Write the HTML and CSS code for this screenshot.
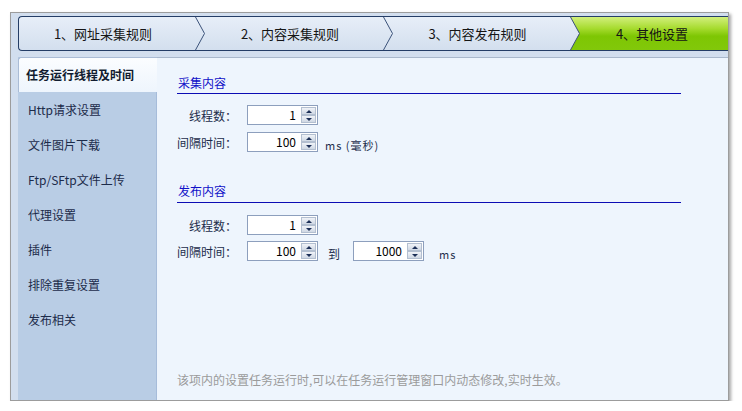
FILE: index.html
```html
<!DOCTYPE html>
<html lang="zh-CN">
<head>
    <meta charset="UTF-8">
    <title>其他设置</title>
    <link rel="stylesheet" href="styles.css">
</head>
<body>
    <div class="frame">
        <div class="steps">
            <div class="step step-1">1、网址采集规则</div>
            <svg class="sep" width="10" height="33" viewBox="0 0 10 33"><polyline points="0.5,0 9.5,16.5 0.5,33" /></svg>
            <div class="step step-2">2、内容采集规则</div>
            <svg class="sep" width="10" height="33" viewBox="0 0 10 33"><polyline points="0.5,0 9.5,16.5 0.5,33" /></svg>
            <div class="step step-3">3、内容发布规则</div>
            <svg class="sep" width="10" height="33" viewBox="0 0 10 33">
                <defs>
                    <linearGradient id="green" x1="0" y1="0" x2="0" y2="1">
                        <stop offset="0" stop-color="#d2ef7c" />
                        <stop offset="0.35" stop-color="#a6db2e" />
                        <stop offset="0.58" stop-color="#7ec603" />
                        <stop offset="1" stop-color="#82c80a" />
                    </linearGradient>
                </defs>
                <polygon points="0.5,0 10,0 10,33 0.5,33 9.5,16.5" fill="url(#green)" />
                <polyline points="0.5,0 9.5,16.5 0.5,33" />
            </svg>
            <div class="step step-active">4、其他设置</div>
        </div>

        <div class="main">
            <ul class="side">
                <li class="active">任务运行线程及时间</li>
                <li>Http请求设置</li>
                <li>文件图片下载</li>
                <li>Ftp/SFtp文件上传</li>
                <li>代理设置</li>
                <li>插件</li>
                <li>排除重复设置</li>
                <li>发布相关</li>
            </ul>

            <div class="content">
                <div class="sec">
                    <div class="sec-title">采集内容</div>
                    <div class="row">
                        <span class="lbl">线程数：</span>
                        <div class="spin"><span class="spin-val">1</span><span class="spin-btns"><i class="up"></i><i class="down"></i></span></div>
                    </div>
                    <div class="row">
                        <span class="lbl">间隔时间：</span>
                        <div class="spin"><span class="spin-val">100</span><span class="spin-btns"><i class="up"></i><i class="down"></i></span></div>
                        <span class="unit">ms (毫秒)</span>
                    </div>
                </div>

                <div class="sec sec-2">
                    <div class="sec-title">发布内容</div>
                    <div class="row">
                        <span class="lbl">线程数：</span>
                        <div class="spin"><span class="spin-val">1</span><span class="spin-btns"><i class="up"></i><i class="down"></i></span></div>
                    </div>
                    <div class="row">
                        <span class="lbl">间隔时间：</span>
                        <div class="spin"><span class="spin-val">100</span><span class="spin-btns"><i class="up"></i><i class="down"></i></span></div>
                        <span class="to">到</span>
                        <div class="spin"><span class="spin-val">1000</span><span class="spin-btns"><i class="up"></i><i class="down"></i></span></div>
                        <span class="unit unit-ms">ms</span>
                    </div>
                </div>

                <p class="note">该项内的设置任务运行时,可以在任务运行管理窗口内动态修改,实时生效。</p>
            </div>
        </div>
    </div>
</body>
</html>
```

FILE: styles.css
```css
* {
    margin: 0;
    padding: 0;
    box-sizing: border-box;
}

body {
    background-color: #fff;
    font-family: "Noto Sans CJK SC", sans-serif;
    font-size: 12px;
    color: #1d2d4b;
}

.frame {
    width: 719px;
    height: 389px;
    margin: 12px 0 0 10px;
    padding: 3px 0 0 7px;
    background-color: #d2deee;
    border: 1px solid #9c9c9c;
    box-shadow: 2px 2px 3px rgba(0, 0, 0, .35);
    overflow: hidden;
    display: flex;
    flex-direction: column;
}

/* wizard steps */
.steps {
    display: flex;
    flex-shrink: 0;
    height: 35px;
    border: 1px solid #243d66;
    border-right: 0;
    border-radius: 4px 0 0 4px;
    background: linear-gradient(#e7eef8, #d3dfee);
}

.step {
    display: flex;
    align-items: center;
    justify-content: center;
    padding-right: 8px;
    font-size: 13px;
    color: #151515;
}

.step-1 { width: 176px; }
.step-2 { width: 178px; }
.step-3 { width: 177px; }

.step-active {
    flex: 1;
    padding-right: 4px;
    background: linear-gradient(#d2ef7c 0%, #a6db2e 35%, #7ec603 58%, #82c80a 100%);
}

.sep {
    display: block;
    flex-shrink: 0;
}

.sep polyline {
    fill: none;
    stroke: #3b5279;
    stroke-width: 1;
}

/* body */
.main {
    display: flex;
    flex: 1;
    margin-top: 6px;
}

.side {
    width: 139px;
    list-style: none;
    background-color: #b9cde5;
    border-right: 1px solid #a6bcda;
}

.side li {
    height: 35px;
    line-height: 35px;
    padding-left: 10px;
    color: #1c2b4a;
}

.side li.active {
    margin-right: -1px;
    padding-left: 7px;
    line-height: 33px;
    font-weight: bold;
    color: #111c30;
    background: linear-gradient(#fbfdff, #eef5fd);
    border-top: 1px solid #aabcd6;
    border-left: 1px solid #aabcd6;
    border-radius: 3px 0 0 0;
}

.content {
    flex: 1;
    display: flex;
    flex-direction: column;
    padding: 17px 0 12px 20px;
    background-color: #eef5fd;
    border-top: 1px solid #a9b8cc;
}

.sec-title {
    width: 504px;
    line-height: 16px;
    padding: 0 0 2px 1px;
    border-bottom: 1px solid #0c0cb4;
    color: #1010c8;
}

.sec-2 {
    margin-top: 31px;
}

.sec-2 .sec-title {
    padding-bottom: 3px;
}

.row {
    display: flex;
    align-items: center;
    height: 20px;
    margin-top: 7px;
}

.sec-title + .row {
    margin-top: 11px;
}

.sec-2 .sec-title + .row {
    margin-top: 12px;
}

.sec-2 .row + .row {
    margin-top: 6px;
}

.lbl {
    width: 60px;
    margin-right: 10px;
    text-align: right;
}

.spin {
    display: flex;
    width: 71px;
    height: 20px;
    background-color: #fff;
    border: 1px solid #8d9fbd;
}

.spin-val {
    flex: 1;
    padding-right: 5px;
    line-height: 18px;
    text-align: right;
    color: #000;
}

.spin-btns {
    width: 16px;
    display: flex;
    flex-direction: column;
    padding: 1px 1px 1px 0;
}

.spin-btns i {
    flex: 1;
    display: flex;
    align-items: center;
    justify-content: center;
    border: 1px solid #b3bfd0;
    background: linear-gradient(#f0f3f8, #cfd8e4);
}

.spin-btns .up::after {
    content: "";
    border: 3px solid transparent;
    border-top: 0;
    border-bottom: 3px solid #1d3058;
}

.spin-btns .down::after {
    content: "";
    border: 3px solid transparent;
    border-bottom: 0;
    border-top: 3px solid #1d3058;
}

.unit {
    margin-left: 7px;
    padding-top: 5px;
    font-size: 11px;
    letter-spacing: 1px;
}

.unit-ms {
    margin-left: 15px;
}

.to {
    margin: 0 13px 0 10px;
    padding-top: 4px;
}

.note {
    margin-top: auto;
    line-height: 16px;
    color: #9b9b9b;
}
```
